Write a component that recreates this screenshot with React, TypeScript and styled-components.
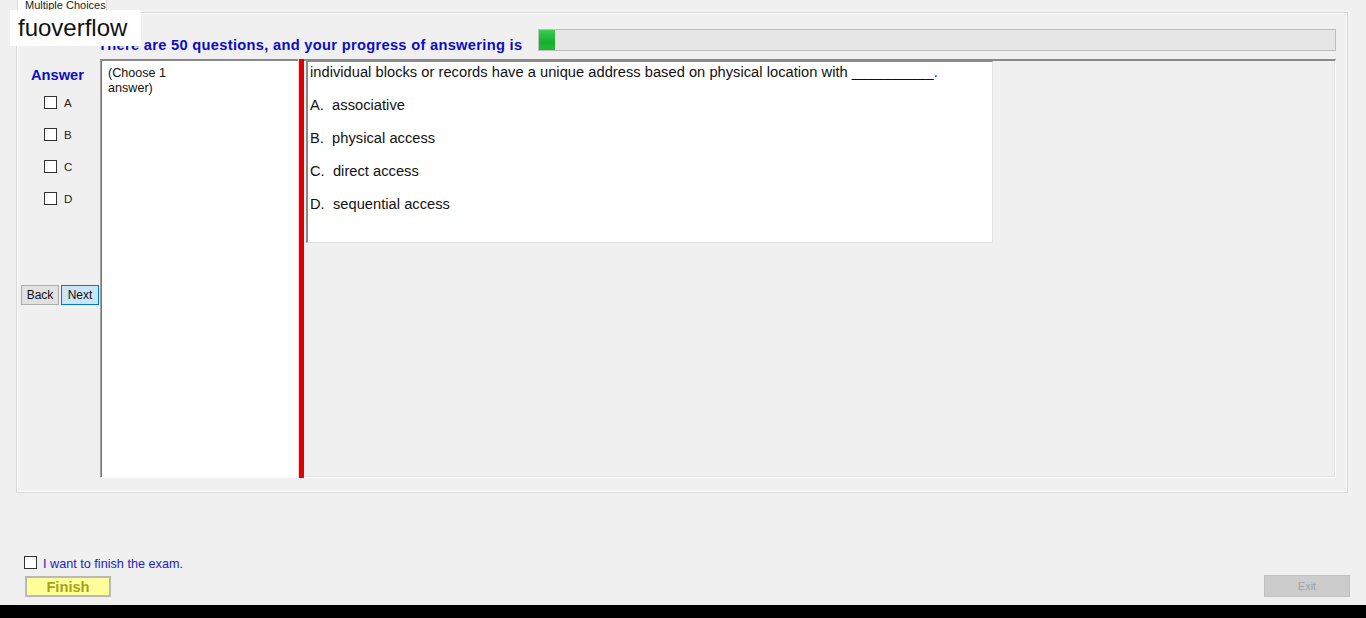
import React from "react";
import styled, { createGlobalStyle } from "styled-components";

const GlobalStyle = createGlobalStyle`
  html, body {
    margin: 0;
    padding: 0;
    background: #f0f0f0;
  }
  body {
    font-family: "Liberation Sans", Arial, sans-serif;
    overflow: hidden;
  }
`;

const Screen = styled.div`
  position: relative;
  display: flex;
  flex-direction: column;
  width: 1366px;
  height: 618px;
  background: #f0f0f0;
`;

const Watermark = styled.div`
  position: absolute;
  left: 10px;
  top: 10px;
  width: 131px;
  height: 36px;
  padding-left: 8px;
  box-sizing: border-box;
  background: #ffffff;
  color: #111;
  font-size: 24px;
  line-height: 36px;
  z-index: 5;
`;

const TabArea = styled.div`
  display: flex;
  flex-direction: column;
  padding: 0 18px 0 16px;
`;

const TabHeader = styled.div`
  width: 90px;
  height: 12px;
  margin-left: 1px;
  box-sizing: border-box;
  border: 1px solid #d9d9d9;
  border-top: none;
  border-bottom: none;
  background: #ffffff;
  font-size: 11px;
  line-height: 10px;
  color: #222;
  padding-left: 7px;
  overflow: hidden;
  white-space: nowrap;
`;

const TabPage = styled.div`
  display: flex;
  flex-direction: column;
  height: 481px;
  box-sizing: border-box;
  border: 1px solid #d9d9d9;
  box-shadow: inset 0 0 0 1px #fafafa;
`;

const HeaderRow = styled.div`
  display: flex;
  align-items: flex-end;
  height: 46px;
  box-sizing: border-box;
  padding: 16px 11px 8px 81px;
  gap: 16px;
`;

const Heading = styled.div`
  color: #0c0cc8;
  font-size: 14.67px;
  letter-spacing: 0.3px;
  font-weight: bold;
  white-space: nowrap;
  line-height: 16px;
  margin-bottom: -2px;
`;

const ProgressTrack = styled.div`
  flex: 1;
  height: 22px;
  box-sizing: border-box;
  border: 1px solid #bcbcbc;
  background: #e6e6e6;
`;

const ProgressFill = styled.div`
  height: 100%;
  background: linear-gradient(#3ccc4e, #18b02c 60%, #1fbb33);
`;

const Body = styled.div`
  display: flex;
  height: 419px;
  padding-right: 11px;
`;

const LeftCol = styled.div`
  display: flex;
  flex-direction: column;
  width: 83px;
  flex-shrink: 0;
`;

const AnswerTitle = styled.div`
  color: #0c0cc8;
  font-size: 14.67px;
  font-weight: bold;
  margin: 8px 0 0 14px;
  line-height: 16px;
`;

const OptionList = styled.div`
  display: flex;
  flex-direction: column;
  gap: 19px;
  margin: 13px 0 0 27px;
`;

const OptionRow = styled.label`
  display: flex;
  align-items: center;
  gap: 7px;
  font-size: 11.5px;
  color: #222;
  height: 13px;
`;

const Box = styled.span`
  display: inline-block;
  flex-shrink: 0;
  width: 13px;
  height: 13px;
  box-sizing: border-box;
  border: 1px solid #333;
  background: #fff;
`;

const NavRow = styled.div`
  display: flex;
  gap: 2px;
  margin: 80px 0 0 4px;
`;

const NavButton = styled.button<{ $focused?: boolean }>`
  width: 38px;
  height: 20px;
  padding: 0;
  box-sizing: border-box;
  font-family: "Liberation Sans", Arial, sans-serif;
  font-size: 12px;
  color: #111;
  background: ${(p) => (p.$focused ? "#cce4f7" : "#e1e1e1")};
  border: 1px solid ${(p) => (p.$focused ? "#0078d7" : "#adadad")};
`;

const Frame = styled.div`
  display: flex;
  flex: 1;
  box-sizing: border-box;
  border-top: 2px solid #8a8a8a;
  border-left: 1px solid #a0a0a0;
  border-right: 1px solid #fcfcfc;
  border-bottom: 1px solid #fcfcfc;
  box-shadow: inset -1px -1px 0 #e3e3e3;
`;

const ChoiceBox = styled.div`
  width: 197px;
  flex-shrink: 0;
  box-sizing: border-box;
  background: #ffffff;
  border-left: 1px solid #777;
  padding: 5px 0 0 6px;
  font-size: 12.6px;
  line-height: 15px;
  color: #111;
`;

const Splitter = styled.div`
  width: 5px;
  flex-shrink: 0;
  margin: -2px 2px -1px 1px;
  background: #e00000;
  box-shadow: -1px 0 0 #ffd0d0;
`;

const QuestionBox = styled.div`
  display: flex;
  flex-direction: column;
  align-self: flex-start;
  width: 687px;
  height: 182px;
  box-sizing: border-box;
  background: #ffffff;
  border-left: 2px solid #8a8a8a;
  border-top: 1px solid #8a8a8a;
  border-right: 1px solid #e3e3e3;
  border-bottom: 1px solid #e3e3e3;
  padding: 2px 0 0 2px;
  font-size: 14.67px;
  letter-spacing: 0.03px;
  color: #111;
`;

const QLine = styled.div`
  height: 33px;
  line-height: 17px;
  white-space: pre;
`;

const Footer = styled.div`
  display: flex;
  flex: 1;
  align-items: flex-end;
  justify-content: space-between;
  padding: 0 16px 8px 24px;
`;

const FinishGroup = styled.div`
  display: flex;
  flex-direction: column;
  gap: 6px;
`;

const ConfirmRow = styled.label`
  display: flex;
  align-items: flex-start;
  gap: 6px;
  color: #1c1cc0;
  font-size: 12.67px;
  line-height: 15px;
  height: 15px;
  margin-top: -3px;
  & > span {
    margin-top: 1px;
  }
`;

const ConfirmText = styled.div`
  padding-top: 2px;
`;

const FinishButton = styled.button`
  width: 86px;
  height: 21px;
  margin-left: 1px;
  padding: 0;
  box-sizing: border-box;
  background: #ffff99;
  border: 2px solid #b8b8b8;
  color: #a3a318;
  font-family: "Liberation Sans", Arial, sans-serif;
  font-size: 14.67px;
  font-weight: bold;
`;

const ExitButton = styled.button`
  width: 86px;
  height: 22px;
  padding: 0;
  box-sizing: border-box;
  background: #cccccc;
  border: 1px solid #bfbfbf;
  color: #a3a3a3;
  font-family: "Liberation Sans", Arial, sans-serif;
  font-size: 11px;
`;

const BlackBar = styled.div`
  height: 13px;
  background: #000;
`;

const options = ["A", "B", "C", "D"];
const answers = [
  "A.  associative",
  "B.  physical access",
  "C.  direct access",
  "D.  sequential access",
];

export default function App() {
  const answered = 1;
  const total = 50;
  return (
    <>
      <GlobalStyle />
      <Screen>
        <Watermark>fuoverflow</Watermark>
        <TabArea>
          <TabHeader>Multiple Choices</TabHeader>
          <TabPage>
            <HeaderRow>
              <Heading>
                There are {total} questions, and your progress of answering is
              </Heading>
              <ProgressTrack>
                <ProgressFill style={{ width: `${(answered / total) * 100}%` }} />
              </ProgressTrack>
            </HeaderRow>
            <Body>
              <LeftCol>
                <AnswerTitle>Answer</AnswerTitle>
                <OptionList>
                  {options.map((o) => (
                    <OptionRow key={o}>
                      <Box />
                      {o}
                    </OptionRow>
                  ))}
                </OptionList>
                <NavRow>
                  <NavButton>Back</NavButton>
                  <NavButton $focused>Next</NavButton>
                </NavRow>
              </LeftCol>
              <Frame>
                <ChoiceBox>
                  (Choose 1
                  <br />
                  answer)
                </ChoiceBox>
                <Splitter />
                <QuestionBox>
                  <QLine>
                    individual blocks or records have a unique address based on
                    physical location with __________.
                  </QLine>
                  {answers.map((a) => (
                    <QLine key={a}>{a}</QLine>
                  ))}
                </QuestionBox>
              </Frame>
            </Body>
          </TabPage>
        </TabArea>
        <Footer>
          <FinishGroup>
            <ConfirmRow>
              <Box />
              <ConfirmText>I want to finish the exam.</ConfirmText>
            </ConfirmRow>
            <FinishButton>Finish</FinishButton>
          </FinishGroup>
          <ExitButton disabled>Exit</ExitButton>
        </Footer>
        <BlackBar />
      </Screen>
    </>
  );
}
